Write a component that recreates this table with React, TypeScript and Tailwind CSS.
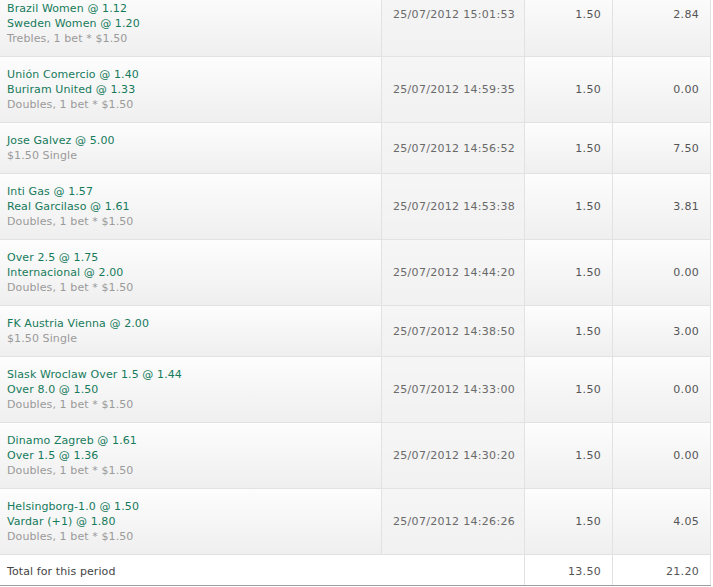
interface BetRow {
  selections: string[];
  note: string;
  placed: string;
  stake: string;
  returns: string;
}

const rows: BetRow[] = [
  {
    selections: ["Brazil Women @ 1.12", "Sweden Women @ 1.20"],
    note: "Trebles, 1 bet * $1.50",
    placed: "25/07/2012 15:01:53",
    stake: "1.50",
    returns: "2.84",
  },
  {
    selections: ["Unión Comercio @ 1.40", "Buriram United @ 1.33"],
    note: "Doubles, 1 bet * $1.50",
    placed: "25/07/2012 14:59:35",
    stake: "1.50",
    returns: "0.00",
  },
  {
    selections: ["Jose Galvez @ 5.00"],
    note: "$1.50 Single",
    placed: "25/07/2012 14:56:52",
    stake: "1.50",
    returns: "7.50",
  },
  {
    selections: ["Inti Gas @ 1.57", "Real Garcilaso @ 1.61"],
    note: "Doubles, 1 bet * $1.50",
    placed: "25/07/2012 14:53:38",
    stake: "1.50",
    returns: "3.81",
  },
  {
    selections: ["Over 2.5 @ 1.75", "Internacional @ 2.00"],
    note: "Doubles, 1 bet * $1.50",
    placed: "25/07/2012 14:44:20",
    stake: "1.50",
    returns: "0.00",
  },
  {
    selections: ["FK Austria Vienna @ 2.00"],
    note: "$1.50 Single",
    placed: "25/07/2012 14:38:50",
    stake: "1.50",
    returns: "3.00",
  },
  {
    selections: ["Slask Wroclaw Over 1.5 @ 1.44", "Over 8.0 @ 1.50"],
    note: "Doubles, 1 bet * $1.50",
    placed: "25/07/2012 14:33:00",
    stake: "1.50",
    returns: "0.00",
  },
  {
    selections: ["Dinamo Zagreb @ 1.61", "Over 1.5 @ 1.36"],
    note: "Doubles, 1 bet * $1.50",
    placed: "25/07/2012 14:30:20",
    stake: "1.50",
    returns: "0.00",
  },
  {
    selections: ["Helsingborg-1.0 @ 1.50", "Vardar (+1) @ 1.80"],
    note: "Doubles, 1 bet * $1.50",
    placed: "25/07/2012 14:26:26",
    stake: "1.50",
    returns: "4.05",
  },
];

function App() {
  return (
    <div className="w-[713px] h-[587px] overflow-hidden bg-white font-['DejaVu_Sans',Verdana,sans-serif] text-[11px] leading-[15px]">
      {/* list is scrolled: first row starts above the fold */}
      <div className="-mt-[9px] w-[711px]">
        {rows.map((row, index) => (
          <div
            key={index}
            className="grid grid-cols-[381px_143px_88px_99px] border-b border-[#e2e2e2] bg-linear-to-b from-[#fdfdfd] to-[#efefef]"
          >
            <div className="px-[7px] py-[10px] tracking-[0.1px]">
              {row.selections.map((s, i) => (
                <p key={i} className="text-[#167a5b]">
                  {s}
                </p>
              ))}
              <p className="text-[#9a9a9a]">{row.note}</p>
            </div>
            <div
              className={
                "flex border-l border-[#e2e2e2] bg-[#f2f2f2]/70 pl-[11px] tracking-[0.3px] text-[#6a6a6a] " +
                (index === 0 ? "items-start pt-[16px]" : "items-center")
              }
            >
              {row.placed}
            </div>
            <div
              className={
                "flex justify-end border-l border-[#e2e2e2] pr-[11px] tracking-[0.3px] text-[#555] " +
                (index === 0 ? "items-start pt-[16px]" : "items-center")
              }
            >
              {row.stake}
            </div>
            <div
              className={
                "flex justify-end border-l border-r border-[#e2e2e2] pr-[11px] tracking-[0.3px] text-[#555] " +
                (index === 0 ? "items-start pt-[16px]" : "items-center")
              }
            >
              {row.returns}
            </div>
          </div>
        ))}
        <div className="grid h-[31px] grid-cols-[524px_88px_99px] border-b border-[#9a9ea3] bg-white">
          <div className="flex items-center pl-[7px] pt-[2px] tracking-[0.1px] text-[#444]">
            Total for this period
          </div>
          <div className="flex items-center justify-end border-l border-[#e2e2e2] pr-[11px] pt-[2px] tracking-[0.3px] text-[#555]">
            13.50
          </div>
          <div className="flex items-center justify-end border-l border-r border-[#e2e2e2] pr-[11px] pt-[2px] tracking-[0.3px] text-[#555]">
            21.20
          </div>
        </div>
      </div>
    </div>
  );
}

export default App;
